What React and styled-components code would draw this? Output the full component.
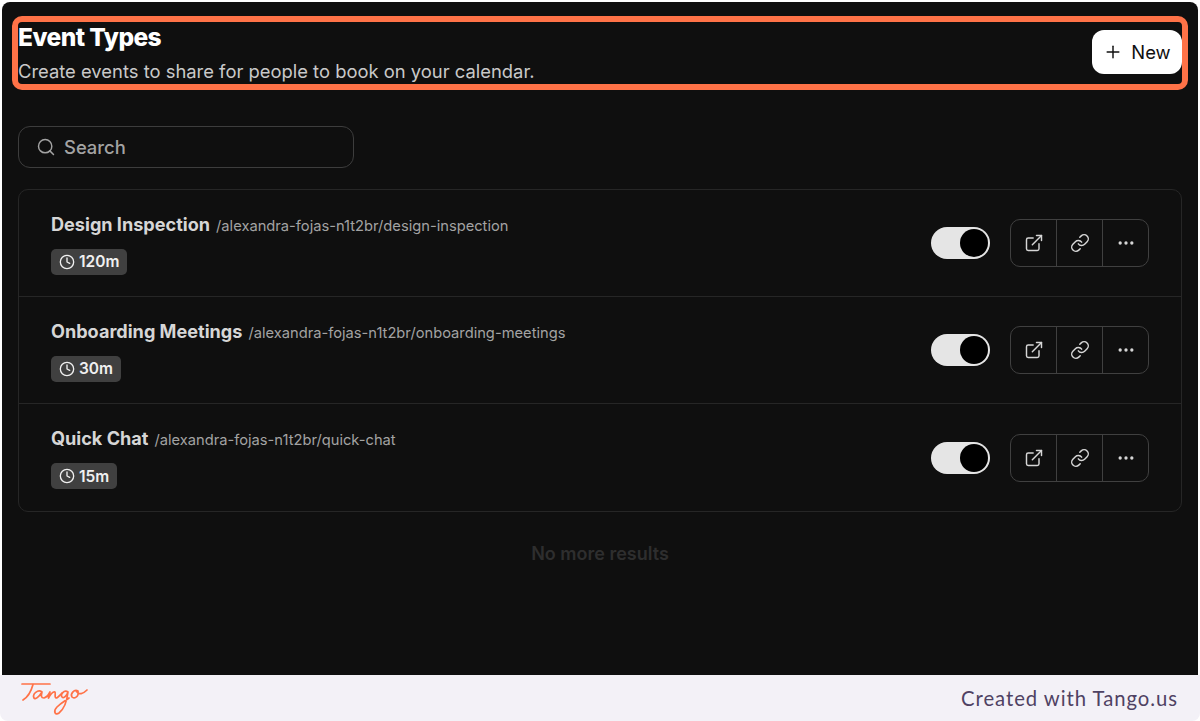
import React from 'react';
import styled, { createGlobalStyle } from 'styled-components';
import { Search, Plus, Clock, ExternalLink, Link, MoreHorizontal } from 'lucide-react';

const events = [
  { id: 1, name: 'Design Inspection', slug: '/alexandra-fojas-n1t2br/design-inspection', time: '120m' },
  { id: 2, name: 'Onboarding Meetings', slug: '/alexandra-fojas-n1t2br/onboarding-meetings', time: '30m' },
  { id: 3, name: 'Quick Chat', slug: '/alexandra-fojas-n1t2br/quick-chat', time: '15m' },
];

const GlobalStyle = createGlobalStyle`
  html, body {
    margin: 0;
    padding: 0;
    background: #fff;
    font-family: Inter, "Liberation Sans", sans-serif;
  }
  * { box-sizing: border-box; }
`;

const Screen = styled.div`
  height: 721px;
  display: flex;
  flex-direction: column;
  padding: 2px 2px 0;
`;

const Panel = styled.main`
  flex: 1;
  background: #0f0f0f;
  border-radius: 8px 8px 0 0;
  padding: 22px 16px 0;
  position: relative;
`;

const Highlight = styled.div`
  position: absolute;
  left: 10px;
  right: 10px;
  top: 14px;
  height: 74px;
  border: 6px solid #ff7247;
  border-radius: 10px;
`;

const Header = styled.header`
  height: 60px;
  display: flex;
  justify-content: space-between;
  align-items: center;
`;

const HeaderText = styled.div`
  margin-top: -1px;
`;

const Title = styled.h1`
  margin: -1px 0 0;
  font-size: 24.5px;
  line-height: 27px;
  font-weight: 800;
  letter-spacing: -0.55px;
  color: #fff;
`;

const Subtitle = styled.p`
  margin: 8px 0 0;
  font-size: 18.4px;
  line-height: 24px;
  color: #c9c9c9;
`;

const NewButton = styled.button`
  position: relative;
  width: 90px;
  height: 44px;
  margin-bottom: 4px;
  display: flex;
  align-items: center;
  justify-content: center;
  gap: 8px;
  border: 0;
  border-radius: 12px;
  background: #fff;
  color: #101010;
  font: 400 18.4px Inter, "Liberation Sans", sans-serif;
  padding: 0;
`;

const SearchBox = styled.div`
  width: 336px;
  height: 42px;
  margin-top: 42px;
  display: flex;
  align-items: center;
  gap: 8px;
  padding: 0 17px;
  border: 1px solid #3d3d3d;
  border-radius: 12px;
  color: #a3a3a3;
  font-size: 18.4px;
  font-weight: 500;
`;

const List = styled.section`
  margin-top: 21px;
  border: 1px solid #262626;
  border-radius: 10px;
`;

const Row = styled.div`
  height: 107px;
  display: flex;
  align-items: center;
  justify-content: space-between;
  padding: 0 32px;
  &:first-child { height: 106px; }
  &:last-child { height: 108px; }
  & + & { border-top: 1px solid #262626; }
`;

const RowText = styled.div`
  display: flex;
  flex-direction: column;
  align-items: flex-start;
  gap: 13px;
`;

const NameLine = styled.div`
  display: flex;
  align-items: baseline;
  gap: 6px;
`;

const Name = styled.span`
  font-size: 18.1px;
  line-height: 24px;
  font-weight: 700;
  color: #d6d6d6;
`;

const Slug = styled.span`
  font-size: 14.7px;
  color: #a3a3a3;
`;

const Badge = styled.span`
  height: 26px;
  display: inline-flex;
  align-items: center;
  gap: 4px;
  padding: 0 8px;
  border-radius: 5px;
  background: #404040;
  color: #f0f0f0;
  font-size: 15.5px;
  font-weight: 600;
`;

const Controls = styled.div`
  display: flex;
  align-items: center;
  gap: 20px;
`;

const Toggle = styled.div`
  width: 59px;
  height: 32px;
  padding: 2px;
  border-radius: 16px;
  background: #e5e5e5;
  display: flex;
  justify-content: flex-end;
`;

const Knob = styled.div`
  width: 28px;
  height: 28px;
  border-radius: 50%;
  background: #000;
`;

const ActionGroup = styled.div`
  height: 48px;
  display: flex;
  border: 1px solid #404040;
  border-radius: 10px;
`;

const ActionButton = styled.div`
  width: 46px;
  display: flex;
  align-items: center;
  justify-content: center;
  color: #d6d6d6;
  &:first-child { width: 45px; }
  & + & { border-left: 1px solid #404040; }
`;

const EndNote = styled.p`
  margin: 31px 0 0;
  text-align: center;
  font-size: 18px;
  line-height: 22px;
  font-weight: 600;
  color: #2e2e2e;
`;

const Footer = styled.footer`
  height: 46px;
  margin: 0 -2px;
  padding: 0 22px 0 20px;
  display: flex;
  align-items: center;
  justify-content: space-between;
  background: #f3f1f7;
  border-radius: 0 0 8px 8px;
`;

const Credit = styled.span`
  font-family: Lato, "Open Sans", sans-serif;
  font-size: 20.3px;
  letter-spacing: 0.95px;
  color: #4f4263;
`;

function TangoLogo() {
  return (
    <svg width="70" height="40" viewBox="0 0 70 40" fill="none" stroke="#ff7247" strokeWidth="1.7" strokeLinecap="round" strokeLinejoin="round">
      <path d="M2 6H30" />
      <path d="M13 6.5C11 14 8 19 3 22" />
      <path d="M22 14C18 11 12 16 14 20C15 22 19 19 22 14C21 18 21 20 24 20C27 19 29 16 30 14C29 17 28 19 28.5 20C30 17 33 13 35 14C36 15 34 19 36 20C38 20 40 17 42 15" />
      <path d="M48 14C44 11 40 17 42 19C44 21 47 17 48 14C47 23 44 31 39 35C35 38 33 33 37 29C41 25 45 23 49 20" />
      <path d="M58 13C54 11 50 16 52 19C54 21 59 19 58 14C58 13 57 13 56.5 13.5C59 17 63 16 67 12" />
    </svg>
  );
}

export default function App() {
  return (
    <>
      <GlobalStyle />
      <Screen>
        <Panel>
          <Highlight />
          <Header>
            <HeaderText>
              <Title>Event Types</Title>
              <Subtitle>Create events to share for people to book on your calendar.</Subtitle>
            </HeaderText>
            <NewButton><Plus size={20} strokeWidth={1.75} />New</NewButton>
          </Header>
          <SearchBox><Search size={20} strokeWidth={1.75} />Search</SearchBox>
          <List>
            {events.map(ev => (
              <Row key={ev.id}>
                <RowText>
                  <NameLine>
                    <Name>{ev.name}</Name>
                    <Slug>{ev.slug}</Slug>
                  </NameLine>
                  <Badge><Clock size={16} strokeWidth={2} />{ev.time}</Badge>
                </RowText>
                <Controls>
                  <Toggle><Knob /></Toggle>
                  <ActionGroup>
                    <ActionButton><ExternalLink size={20} strokeWidth={1.75} /></ActionButton>
                    <ActionButton><Link size={20} strokeWidth={1.75} /></ActionButton>
                    <ActionButton><MoreHorizontal size={20} strokeWidth={2} /></ActionButton>
                  </ActionGroup>
                </Controls>
              </Row>
            ))}
          </List>
          <EndNote>No more results</EndNote>
        </Panel>
        <Footer>
          <TangoLogo />
          <Credit>Created with Tango.us</Credit>
        </Footer>
      </Screen>
    </>
  );
}
